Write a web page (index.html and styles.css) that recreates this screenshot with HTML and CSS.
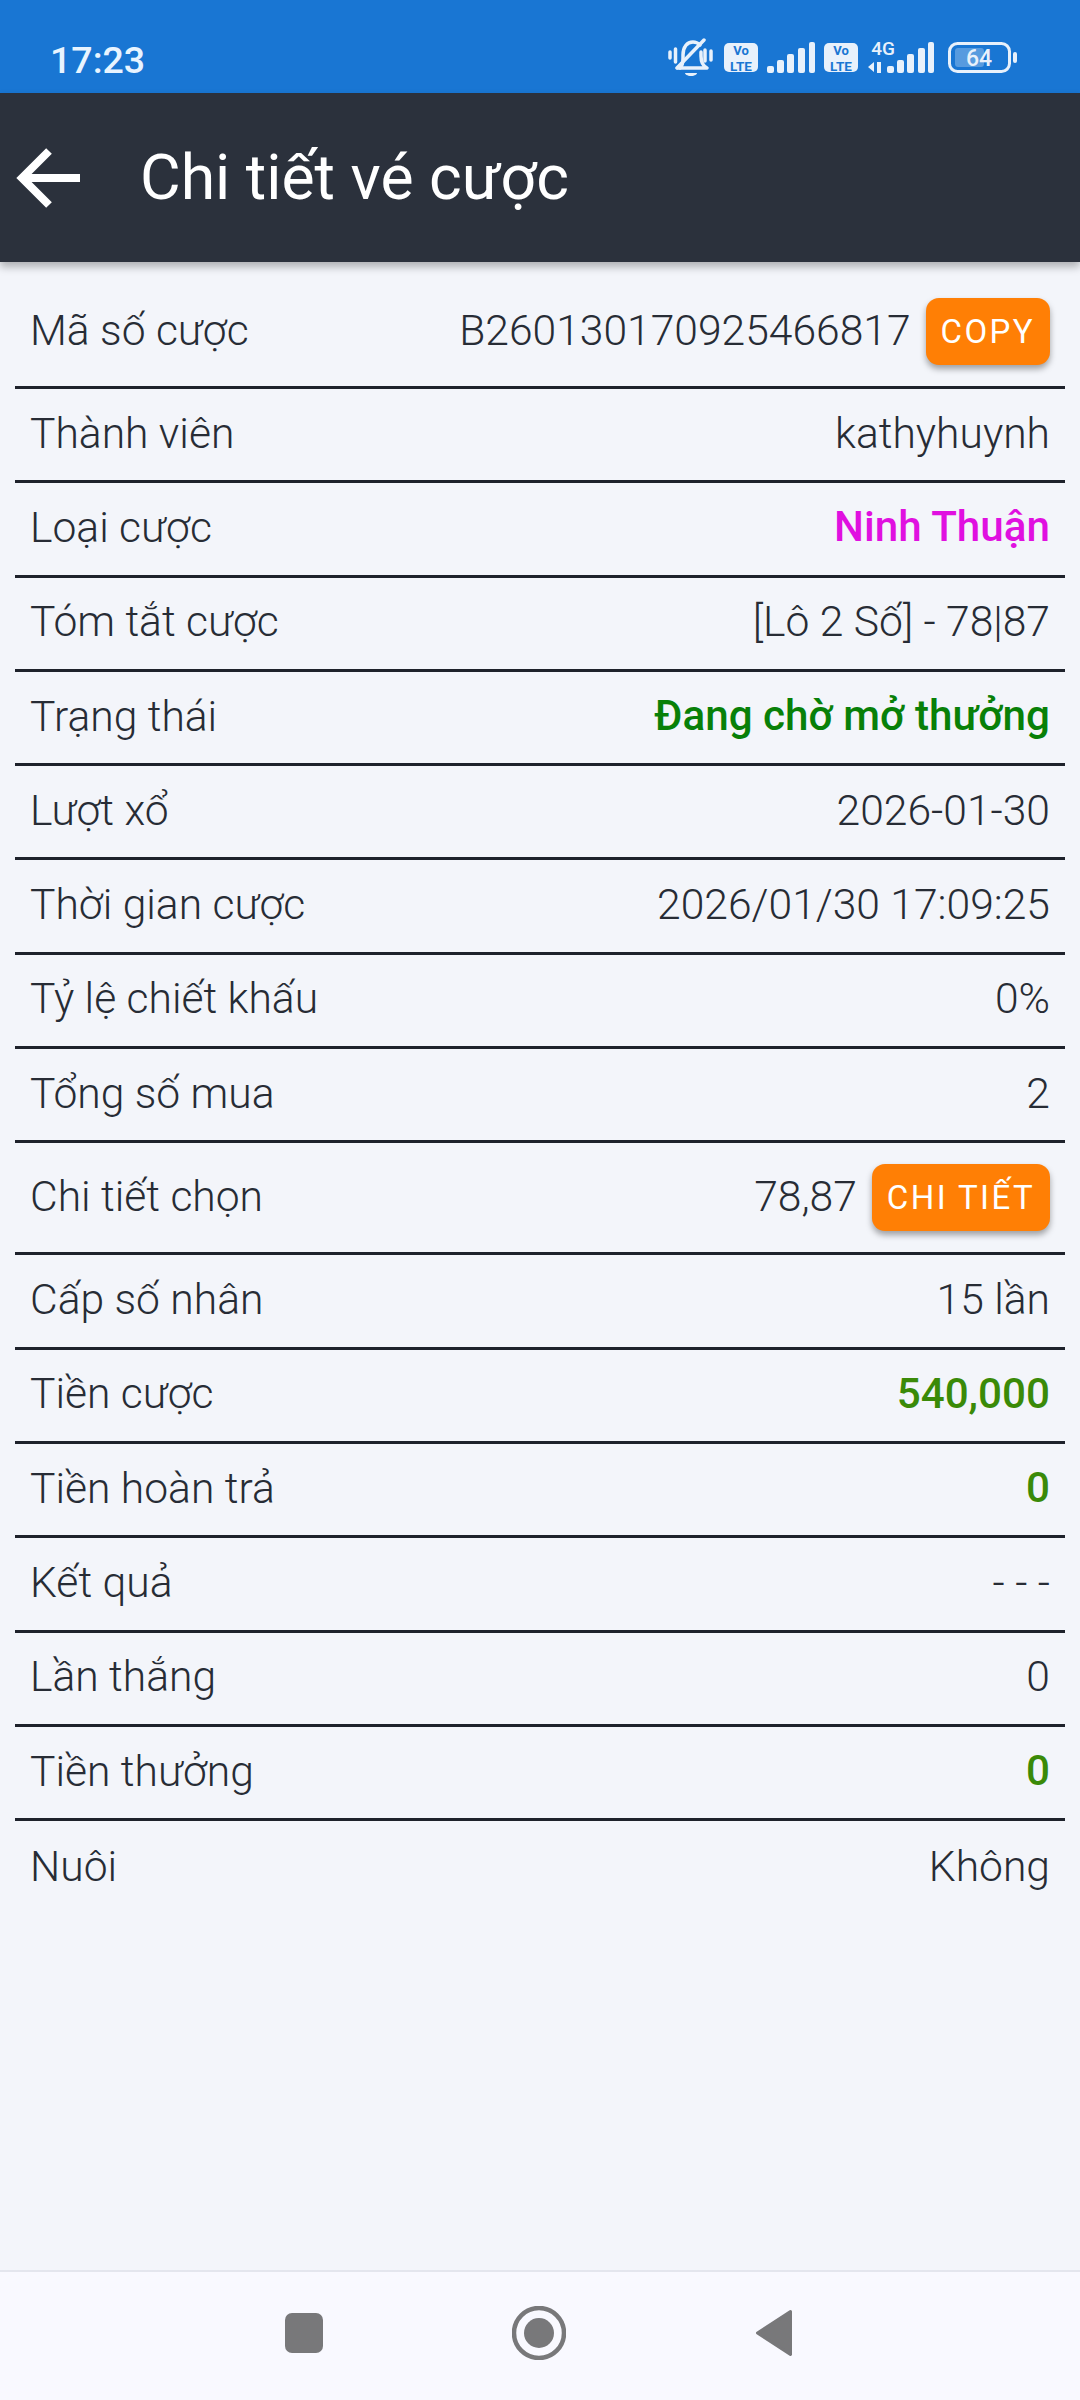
FILE: index.html
```html
<!DOCTYPE html>
<html lang="vi">
<head>
<meta charset="utf-8">
<title>Chi tiết vé cược</title>
<link rel="stylesheet" href="styles.css">
</head>
<body>
<div class="screen">
  <div class="status">
    <span class="time">17:23</span>
    <svg class="status-icons" width="349" height="42" viewBox="668 38 349 42">
      <g fill="none" stroke="#e8f1fb" stroke-linecap="round" stroke-linejoin="round" stroke-width="3.500">
        <path d="M680 68c2-2 3-5 3-10v-3c0-8 4-13 10-13 3 0 5 1 7 3"/>
        <path d="M701 52v4c0 5 2 10 6 12H678"/>
        <path d="M677 68 704 40"/>
        <path d="M670 52v6M675.500 49v13M705 50v11M711 51v9"/>
      </g>
      <path d="M685 73h12c0 1-2 3-6 3s-6-2-6-3z" fill="#e8f1fb"/>
      <rect x="724" y="43" width="34" height="29" rx="5" fill="#e8f1fb"/>
      <text class="vo" x="741" y="55" text-anchor="middle">Vo</text>
      <text class="lte" x="741" y="70.500" text-anchor="middle">LTE</text>
      <g fill="#e8f1fb">
        <rect x="767" y="66" width="7" height="7" rx="2"/>
        <rect x="777" y="60" width="7" height="13" rx="2"/>
        <rect x="787" y="54" width="7" height="19" rx="2"/>
        <rect x="798" y="48" width="7" height="25" rx="2"/>
        <rect x="809" y="42" width="6" height="31" rx="2"/>
      </g>
      <rect x="824" y="43" width="34" height="29" rx="5" fill="#e8f1fb"/>
      <text class="vo" x="841" y="55" text-anchor="middle">Vo</text>
      <text class="lte" x="841" y="70.500" text-anchor="middle">LTE</text>
      <text class="four-g" x="883" y="55" text-anchor="middle">4G</text>
      <g fill="#e8f1fb">
        <path d="M874 62v10l-6-5zM877 73V62l4 0v11z"/>
        <rect x="887" y="66" width="7" height="7" rx="2"/>
        <rect x="897" y="60" width="7" height="13" rx="2"/>
        <rect x="907" y="54" width="7" height="19" rx="2"/>
        <rect x="918" y="48" width="7" height="25" rx="2"/>
        <rect x="928" y="42" width="6" height="31" rx="2"/>
      </g>
      <rect x="949.500" y="43.500" width="60" height="28" rx="8" fill="none" stroke="#e8f1fb" stroke-width="3"/>
      <rect x="955" y="48" width="29" height="19" rx="3" fill="#e8f1fb" fill-opacity=".3"/>
      <rect x="1013" y="52" width="4" height="11" rx="2" fill="#e8f1fb"/>
      <text class="batt" x="979" y="65.500" text-anchor="middle">64</text>
    </svg>
  </div>
  <header class="appbar">
    <svg class="back" width="64" height="64" viewBox="0 0 64 64">
      <path d="M64 32H6M33 5 6 32l27 27" fill="none" stroke="#fff" stroke-width="8"/>
    </svg>
    <h1 class="title">Chi tiết vé cược</h1>
  </header>
  <main class="list">
    <div class="row row-btn"><span class="label">Mã số cược</span><span class="value-wrap"><span class="value">B260130170925466817</span><span class="btn">COPY</span></span></div>
    <div class="row"><span class="label">Thành viên</span><span class="value">kathyhuynh</span></div>
    <div class="row"><span class="label">Loại cược</span><span class="value strong magenta">Ninh Thuận</span></div>
    <div class="row"><span class="label">Tóm tắt cược</span><span class="value">[Lô 2 Số] - 78|87</span></div>
    <div class="row"><span class="label">Trạng thái</span><span class="value strong green">Đang chờ mở thưởng</span></div>
    <div class="row"><span class="label">Lượt xổ</span><span class="value">2026-01-30</span></div>
    <div class="row"><span class="label">Thời gian cược</span><span class="value">2026/01/30 17:09:25</span></div>
    <div class="row"><span class="label">Tỷ lệ chiết khấu</span><span class="value">0%</span></div>
    <div class="row"><span class="label">Tổng số mua</span><span class="value">2</span></div>
    <div class="row row-btn"><span class="label">Chi tiết chọn</span><span class="value-wrap"><span class="value">78,87</span><span class="btn">CHI TIẾT</span></span></div>
    <div class="row"><span class="label">Cấp số nhân</span><span class="value">15 lần</span></div>
    <div class="row"><span class="label">Tiền cược</span><span class="value strong money">540,000</span></div>
    <div class="row"><span class="label">Tiền hoàn trả</span><span class="value strong money">0</span></div>
    <div class="row"><span class="label">Kết quả</span><span class="value">- - -</span></div>
    <div class="row"><span class="label">Lần thắng</span><span class="value">0</span></div>
    <div class="row"><span class="label">Tiền thưởng</span><span class="value strong money">0</span></div>
    <div class="row"><span class="label">Nuôi</span><span class="value">Không</span></div>
  </main>
  <nav class="navbar">
    <svg width="38" height="40" viewBox="0 0 38 40"><rect width="38" height="40" rx="7" fill="#78787a"/></svg>
    <svg width="54" height="54" viewBox="0 0 54 54"><circle cx="27" cy="27" r="25" fill="none" stroke="#78787a" stroke-width="4.500"/><circle cx="27" cy="27" r="15" fill="#78787a"/></svg>
    <svg width="38" height="48" viewBox="0 0 38 48"><path d="M35.500 2.500 2.500 24l33 21.500z" fill="#78787a" stroke="#78787a" stroke-width="3" stroke-linejoin="round"/></svg>
  </nav>
</div>
</body>
</html>
```
FILE: styles.css
```css
* { box-sizing: border-box; }
html, body { margin: 0; padding: 0; }
body { font-family: Roboto, "Noto Sans", sans-serif; background: #f3f5fa; }
.screen { width: 1080px; height: 2400px; display: flex; flex-direction: column; overflow: hidden; }
.status { height: 93px; flex: none; background: #1976d3; color: #e8f4ff; display: flex; align-items: flex-end; justify-content: space-between; padding: 0 63px 13px 50px; }
.time { font-size: 37.500px; line-height: 44px; font-weight: 500; margin-bottom: -2px; }
.status-icons { display: block; }
.vo, .lte, .four-g, .batt { font-family: Roboto, sans-serif; font-weight: 500; }
.vo { font-size: 13px; fill: #1976d3; font-weight: 700; }
.lte { font-size: 13.500px; fill: #1976d3; font-weight: 700; }
.four-g { font-size: 19px; fill: #e8f1fb; }
.batt { font-size: 23px; fill: #e8f1fb; }
.appbar { height: 169px; flex: none; background: #2b313c; display: flex; align-items: center; padding-left: 16px; box-shadow: 0 5px 8px rgba(0,0,0,.28); position: relative; z-index: 1; }
.back { display: block; flex: none; margin-right: 60px; }
.title { margin: 0; color: #fff; font-size: 62.500px; line-height: 70px; font-weight: 400; }
.list { flex: 1; padding: 15px 15px 0; }
.row { height: 94.3px; display: flex; align-items: center; justify-content: space-between; padding: 0 15px; border-bottom: 3px solid #1e222b; color: #272c35; font-size: 42.600px; font-weight: 300; }
.row:last-child { border-bottom: none; }
.row-btn { height: 112px; }
.label, .value { margin-bottom: 4px; }
.value-wrap { display: flex; align-items: center; gap: 15px; }
.strong { font-weight: 500; font-size: 42.200px; }
.magenta { color: #e010e0; }
.green { color: #088008; }
.money { color: #3a8a08; }
.btn { height: 67px; display: flex; align-items: center; padding: 0 15px; background: #ff7f05; color: #fff; font-size: 33px; font-weight: 400; letter-spacing: 2.400px; border-radius: 13px; box-shadow: 0 4px 6px rgba(0,0,0,.35); }
.navbar { height: 130px; flex: none; background: #f9f9ff; border-top: 2px solid #e4e6ee; display: flex; align-items: center; justify-content: center; gap: 189px; padding: 0 2px 6px 0; }
```
